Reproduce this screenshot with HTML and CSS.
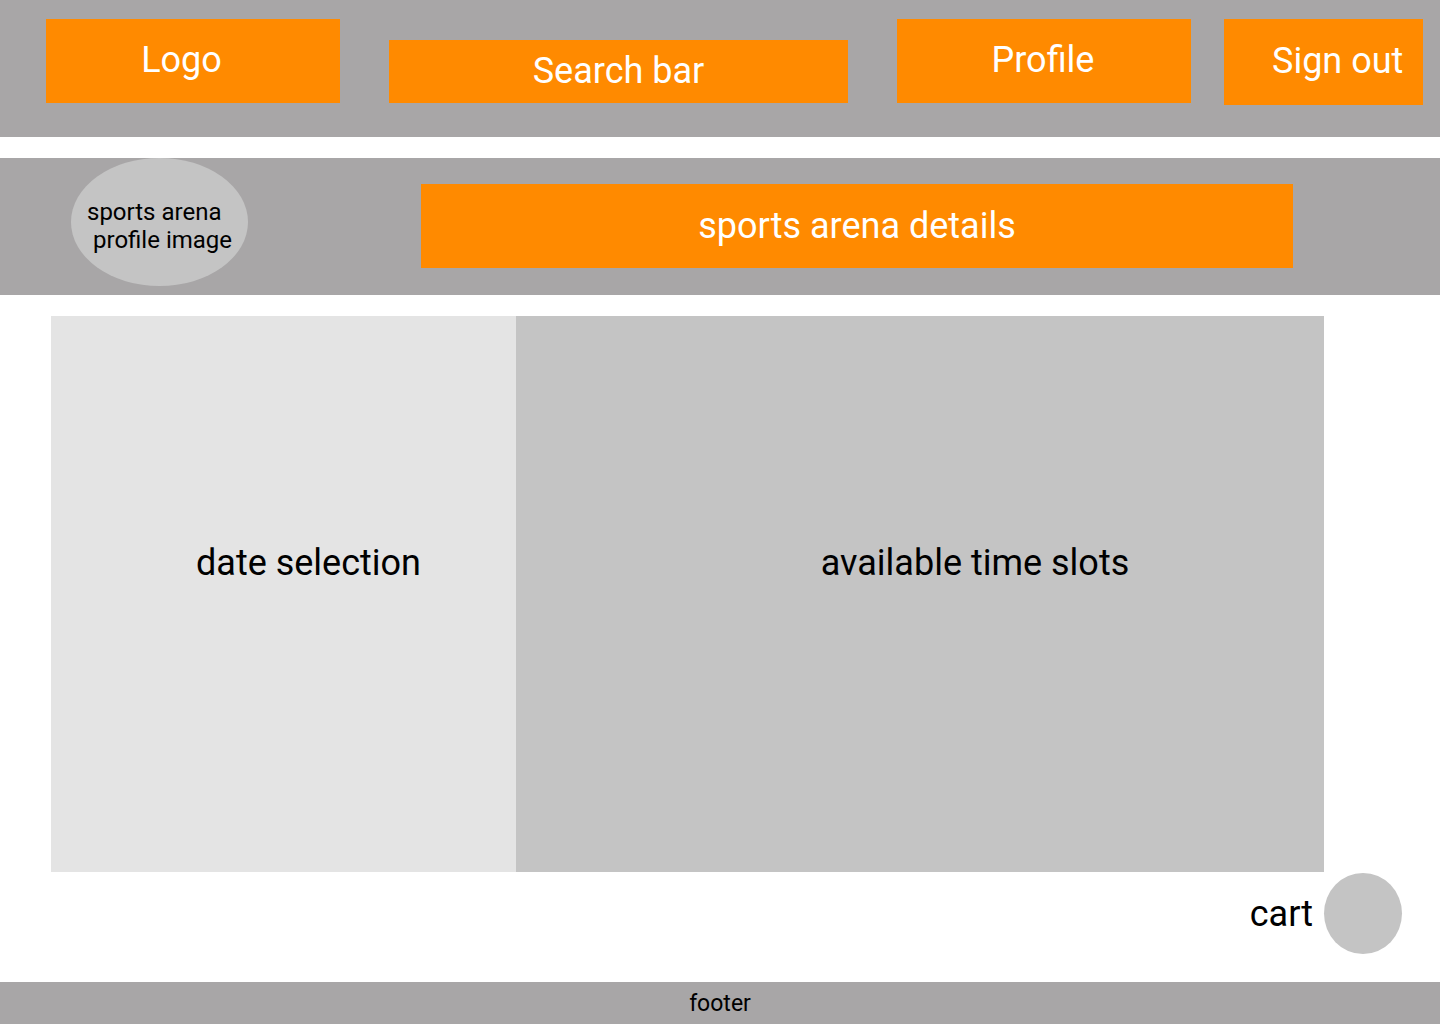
FILE: index.html
```html
<!DOCTYPE html>
<html>
<head>
<meta charset="utf-8">
<link rel="stylesheet" href="styles.css">
</head>
<body>
<header class="topbar">
  <div class="box logo">Logo</div>
  <div class="box search">Search bar</div>
  <div class="box profile">Profile</div>
  <div class="box signout">Sign out</div>
</header>
<section class="banner">
  <div class="avatar">
    <span class="l1">sports arena</span>
    <span class="l2">profile image</span>
  </div>
  <div class="box details">sports arena details</div>
</section>
<main class="content">
  <div class="panel dates">date selection</div>
  <div class="panel slots">available time slots</div>
</main>
<div class="cartrow">
  <span class="cartlabel">cart</span>
  <div class="cartcircle"></div>
</div>
<footer class="footer">footer</footer>
</body>
</html>
```
FILE: styles.css
```css
* { box-sizing: border-box; }
html, body { margin: 0; padding: 0; }
body {
  width: 1440px;
  height: 1024px;
  font-family: Roboto, "Noto Sans", sans-serif;
  background: #ffffff;
  color: #000;
  overflow: hidden;
}
.topbar {
  height: 137px;
  background: #a8a6a7;
  display: flex;
  align-items: flex-start;
  padding-left: 46px;
}
.box {
  background: #ff8a00;
  color: #ffffff;
  display: flex;
  align-items: center;
  justify-content: center;
  font-size: 36px;
  line-height: 1;
}
.logo {
  width: 294px;
  height: 84px;
  margin-top: 19px;
  padding-right: 23px;
  padding-bottom: 2px;
}
.search {
  width: 459px;
  height: 63px;
  margin-top: 40px;
  margin-left: 49px;
  padding-bottom: 1px;
}
.profile {
  width: 294px;
  height: 84px;
  margin-top: 19px;
  margin-left: 49px;
  padding-right: 2px;
  padding-bottom: 2px;
}
.signout {
  width: 199px;
  height: 86px;
  margin-top: 19px;
  margin-left: 33px;
  justify-content: flex-start;
  padding-left: 48px;
  padding-bottom: 2px;
}
.banner {
  margin-top: 21px;
  height: 137px;
  background: #a8a6a7;
  display: flex;
  align-items: flex-start;
  padding-left: 71px;
}
.avatar {
  width: 177px;
  height: 128px;
  border-radius: 50%;
  background: #c4c4c4;
  display: flex;
  flex-direction: column;
  justify-content: center;
  font-size: 24px;
  line-height: 28px;
  padding-left: 16px;
  padding-top: 8px;
  white-space: nowrap;
}
.avatar .l2 { padding-left: 6px; }
.details {
  width: 872px;
  height: 84px;
  margin-top: 26px;
  margin-left: 173px;
}
.content {
  margin-top: 21px;
  margin-left: 51px;
  display: flex;
  height: 556px;
}
.panel {
  display: flex;
  align-items: center;
  justify-content: center;
  font-size: 36px;
  padding-bottom: 62px;
}
.dates {
  width: 465px;
  background: #e4e4e4;
  padding-left: 50px;
}
.slots {
  width: 808px;
  background: #c4c4c4;
  padding-left: 110px;
}
.cartrow {
  height: 110px;
  display: flex;
  justify-content: flex-end;
  align-items: flex-start;
  padding-right: 38px;
}
.cartlabel {
  font-size: 36px;
  line-height: 1;
  margin-top: 24px;
  margin-right: 11px;
}
.cartcircle {
  width: 78px;
  height: 81px;
  border-radius: 50%;
  background: #c4c4c4;
  margin-top: 1px;
}
.footer {
  height: 42px;
  background: #a8a6a7;
  display: flex;
  align-items: center;
  justify-content: center;
  font-size: 23px;
}
```
